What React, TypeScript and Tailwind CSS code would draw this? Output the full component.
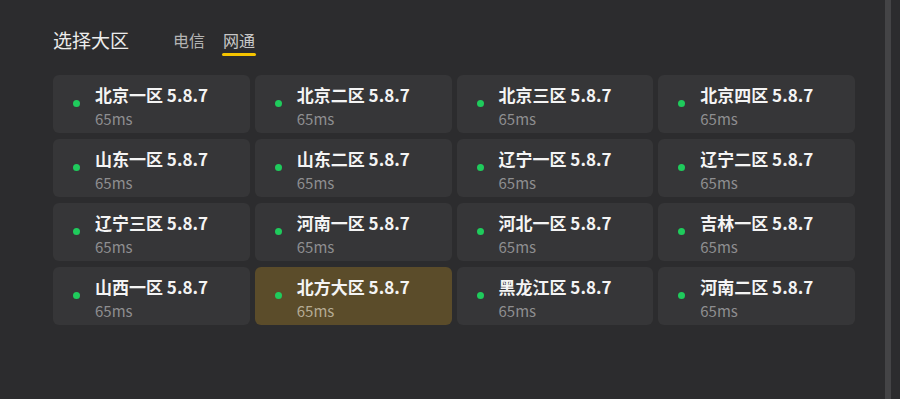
import React from "react";

const zones = [
  "北京一区", "北京二区", "北京三区", "北京四区",
  "山东一区", "山东二区", "辽宁一区", "辽宁二区",
  "辽宁三区", "河南一区", "河北一区", "吉林一区",
  "山西一区", "北方大区", "黑龙江区", "河南二区",
];

export default function App() {
  return (
    <div
      className="flex h-[399px] w-[900px] bg-[#2c2c2e] overflow-hidden"
      style={{ fontFamily: '"Noto Sans CJK SC", "Noto Sans", sans-serif' }}
    >
      <div className="flex-1 pl-[53px] pr-[30px] pt-[25px]">
        {/* Header */}
        <div className="flex items-start h-[50px]">
          <span className="text-[19px] leading-[30px] text-[#ececec]">选择大区</span>
          <div className="flex ml-[44px] gap-[17px] pt-[3px]">
            <span className="text-[16px] leading-[24px] text-[#b4b4b4]">电信</span>
            <div className="flex flex-col items-center">
              <span className="text-[16px] leading-[24px] text-[#c8c8c8]">网通</span>
              <div className="h-[3px] w-[34px] bg-[#f5c400] rounded-full mt-[1px]"></div>
            </div>
          </div>
        </div>

        {/* Zone grid */}
        <div className="grid grid-cols-4 gap-x-[5px] gap-y-[6px] w-[802px]">
          {zones.map((name) => {
            const active = name === "北方大区";
            return (
              <div
                key={name}
                className={`h-[58px] rounded-[6px] flex items-start pl-[20px] pt-[8px] ${
                  active ? "bg-[#5b4c2a]" : "bg-[#363638]"
                }`}
              >
                <span className="size-[7px] rounded-full bg-[#1fcb5c] mt-[17px]"></span>
                <div className="ml-[15px] flex flex-col">
                  <span className="text-[17px] leading-[24px] font-bold text-[#f4f4f4]">
                    {name} 5.8.7
                  </span>
                  <span
                    className={`text-[15px] leading-[24px] ${
                      active ? "text-[#b5ab94]" : "text-[#8e8e90]"
                    }`}
                  >
                    65ms
                  </span>
                </div>
              </div>
            );
          })}
        </div>
      </div>

      {/* Scrollbar */}
      <div className="w-[15px] flex">
        <div className="w-[6px] h-full bg-[#444446]"></div>
      </div>
    </div>
  );
}
